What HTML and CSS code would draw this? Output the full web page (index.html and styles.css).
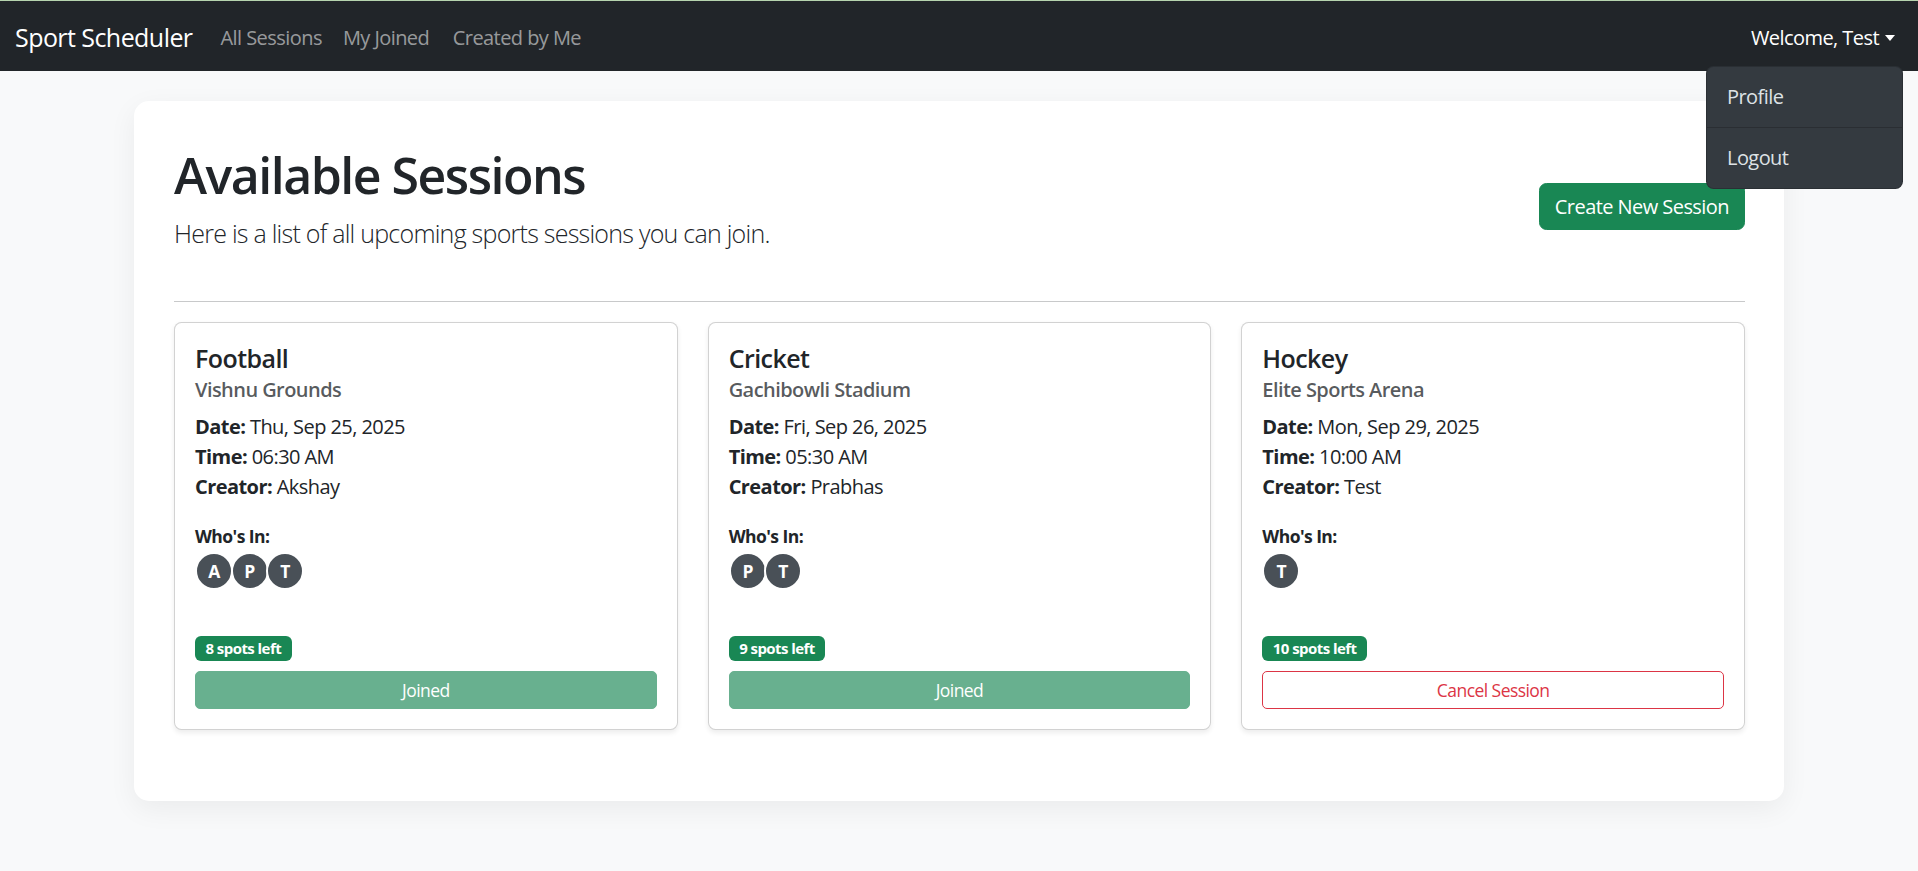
FILE: index.html
```html
<!DOCTYPE html>
<html lang="en">
<head>
<meta charset="utf-8">
<title>Sport Scheduler</title>
<link rel="stylesheet" href="styles.css">
</head>
<body>
<nav class="navbar">
  <div class="nav-left">
    <a class="brand" href="#">Sport Scheduler</a>
    <ul class="nav-links">
      <li><a href="#">All Sessions</a></li>
      <li><a href="#">My Joined</a></li>
      <li><a href="#">Created by Me</a></li>
    </ul>
  </div>
  <div class="nav-right">
    <a class="user-toggle" href="#">Welcome, Test<span class="caret"></span></a>
    <div class="dropdown-menu">
      <a class="dropdown-item" href="#">Profile</a>
      <div class="dropdown-divider"></div>
      <a class="dropdown-item" href="#">Logout</a>
    </div>
  </div>
</nav>

<main class="panel">
  <div class="panel-header">
    <div>
      <h1 class="page-title">Available Sessions</h1>
      <p class="lead">Here is a list of all upcoming sports sessions you can join.</p>
    </div>
    <button class="btn-create">Create New Session</button>
  </div>
  <hr class="divider">

  <div class="session-grid">
    <div class="session-card">
      <h5 class="card-title">Football</h5>
      <h6 class="card-subtitle">Vishnu Grounds</h6>
      <p class="card-text"><strong>Date:</strong> Thu, Sep 25, 2025<br><strong>Time:</strong> 06:30 AM<br><strong>Creator:</strong> Akshay</p>
      <div class="who-label">Who's In:</div>
      <div class="avatars">
        <span class="avatar">A</span><span class="avatar">P</span><span class="avatar">T</span>
      </div>
      <div class="card-footer">
        <span class="badge">8 spots left</span>
        <button class="btn-sm btn-joined">Joined</button>
      </div>
    </div>

    <div class="session-card">
      <h5 class="card-title">Cricket</h5>
      <h6 class="card-subtitle">Gachibowli Stadium</h6>
      <p class="card-text"><strong>Date:</strong> Fri, Sep 26, 2025<br><strong>Time:</strong> 05:30 AM<br><strong>Creator:</strong> Prabhas</p>
      <div class="who-label">Who's In:</div>
      <div class="avatars">
        <span class="avatar">P</span><span class="avatar">T</span>
      </div>
      <div class="card-footer">
        <span class="badge">9 spots left</span>
        <button class="btn-sm btn-joined">Joined</button>
      </div>
    </div>

    <div class="session-card">
      <h5 class="card-title">Hockey</h5>
      <h6 class="card-subtitle">Elite Sports Arena</h6>
      <p class="card-text"><strong>Date:</strong> Mon, Sep 29, 2025<br><strong>Time:</strong> 10:00 AM<br><strong>Creator:</strong> Test</p>
      <div class="who-label">Who's In:</div>
      <div class="avatars">
        <span class="avatar">T</span>
      </div>
      <div class="card-footer">
        <span class="badge">10 spots left</span>
        <button class="btn-sm btn-cancel">Cancel Session</button>
      </div>
    </div>
  </div>
</main>
</body>
</html>
```

FILE: styles.css
```css
* { box-sizing: border-box; }

html, body {
  margin: 0;
  padding: 0;
}

body {
  background: #f8f9fa;
  font-family: "Open Sans", "Noto Sans", sans-serif;
  font-size: 20px;
  line-height: 1.5;
  color: #212529;
  letter-spacing: -0.028em;
  min-height: 871px;
}

a { text-decoration: none; }

/* Navbar */
.navbar {
  position: relative;
  height: 71px;
  background: #212529;
  border-top: 1px solid #b6d4ae;
  display: flex;
  align-items: center;
  justify-content: space-between;
  padding: 3px 15px 0;
}

.nav-left {
  display: flex;
  align-items: center;
}

.brand {
  color: #fff;
  font-size: 25px;
  line-height: 37.5px;
  margin-right: 18px;
}

.nav-links {
  display: flex;
  list-style: none;
  margin: 0;
  padding: 0;
}

.nav-links a {
  display: block;
  padding: 10px 10.5px;
  line-height: 30px;
  color: rgba(255, 255, 255, 0.55);
}

.nav-links li:first-child a {
  padding-left: 10px;
}

.nav-links li:last-child a {
  padding-left: 13px;
}

.nav-right {
  position: relative;
  height: 100%;
  display: flex;
  align-items: center;
}

.user-toggle {
  display: flex;
  align-items: center;
  color: #fff;
  padding: 10px 8px 10px 10px;
  line-height: 30px;
}

.caret {
  display: inline-block;
  margin-left: 6px;
  width: 0;
  height: 0;
  border-top: 6px solid #fff;
  border-left: 5.5px solid transparent;
  border-right: 5.5px solid transparent;
}

.dropdown-menu {
  position: absolute;
  top: 62px;
  right: 0;
  width: 197px;
  background: #343a40;
  border: 1px solid rgba(0, 0, 0, 0.175);
  border-radius: 7.5px;
  z-index: 10;
  overflow: hidden;
}

.dropdown-item {
  display: block;
  padding: 15px 20px;
  line-height: 30px;
  color: #dee2e6;
}

.dropdown-divider {
  height: 1px;
  background: #2a2e33;
}

/* Panel */
.panel {
  width: 1650px;
  margin: 30px auto 0;
  background: #fff;
  border-radius: 15px;
  padding: 44px 39px 41px 40px;
  box-shadow: 0 8px 28px rgba(0, 0, 0, 0.06);
}

.panel-header {
  display: flex;
  align-items: center;
  justify-content: space-between;
  margin-bottom: 28px;
}

.page-title {
  margin: 0 0 10px;
  font-size: 50px;
  line-height: 60px;
  font-weight: 600;
  letter-spacing: -0.03em;
}

.lead {
  margin: 0 0 20px;
  font-size: 25px;
  line-height: 37.5px;
  font-weight: 300;
  letter-spacing: -0.03em;
}

.btn-create {
  font-family: inherit;
  letter-spacing: inherit;
  font-size: 20px;
  line-height: 30px;
  padding: 7.5px 15px;
  color: #fff;
  background: #198754;
  border: 1px solid #198754;
  border-radius: 7.5px;
  margin-top: -4px;
}

.divider {
  margin: 20px 0;
  border: 0;
  border-top: 1px solid #c8c9ca;
}

/* Session cards */
.session-grid {
  display: grid;
  grid-template-columns: repeat(3, 1fr);
  gap: 30px;
  margin-bottom: 30px;
}

.session-card {
  display: flex;
  flex-direction: column;
  background: #fff;
  border: 1px solid rgba(0, 0, 0, 0.175);
  border-radius: 7.5px;
  padding: 20px;
  box-shadow: 0 2.5px 5px rgba(0, 0, 0, 0.075);
}

.card-title {
  margin: 0 0 10px;
  font-size: 25px;
  line-height: 30px;
  font-weight: 600;
}

.card-subtitle {
  margin: -5px 0 10px;
  font-size: 20px;
  line-height: 24px;
  font-weight: 600;
  color: rgba(33, 37, 41, 0.75);
}

.card-text {
  margin: 0 0 21px;
  line-height: 30px;
}

.card-text strong { font-weight: 700; }

.who-label {
  font-size: 17.5px;
  line-height: 26px;
  font-weight: 700;
}

.avatars {
  display: flex;
  margin-top: 3px;
}

.avatar {
  width: 38px;
  height: 38px;
  border-radius: 50%;
  background: #495057;
  border: 2px solid #fff;
  color: #fff;
  font-size: 17.5px;
  font-weight: 700;
  line-height: 34px;
  text-align: center;
  margin-right: -2.5px;
}

.card-footer {
  display: flex;
  flex-direction: column;
  margin-top: 46px;
}

.badge {
  align-self: flex-start;
  background: #198754;
  color: #fff;
  font-size: 15px;
  font-weight: 700;
  line-height: 1;
  padding: 5.25px 10.5px;
  border-radius: 6px;
  margin-bottom: 10px;
}

.btn-sm {
  width: 100%;
  font-family: inherit;
  letter-spacing: inherit;
  font-size: 17.5px;
  line-height: 26.25px;
  padding: 5px 10px;
  border-radius: 5px;
  border: 1px solid transparent;
}

.btn-joined {
  background: #198754;
  border-color: #198754;
  color: #fff;
  opacity: 0.65;
}

.btn-cancel {
  background: transparent;
  border-color: #dc3545;
  color: #dc3545;
}
```
